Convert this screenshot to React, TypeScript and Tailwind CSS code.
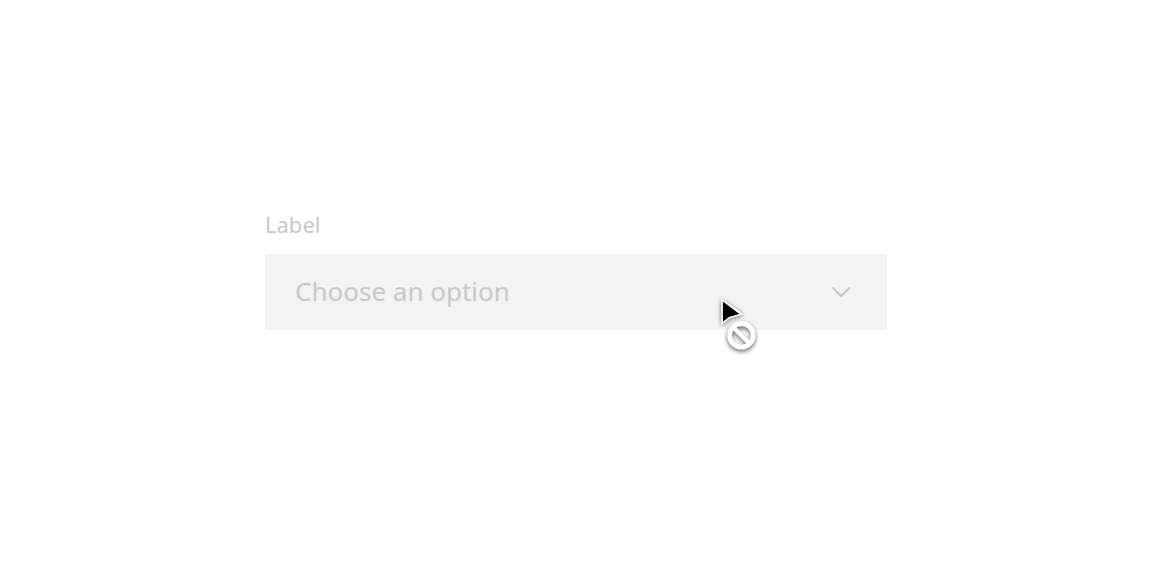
export default function App() {
  return (
    <main className="flex min-h-screen justify-center bg-white px-6 pt-52 font-['Noto_Sans',sans-serif] text-[#c8c8c8]">
      <div className="flex w-full max-w-[622px] flex-col">
        <label htmlFor="option" className="mb-3.5 text-[22px] leading-8">
          Label
        </label>
        <div className="relative cursor-not-allowed">
          <select
            id="option"
            disabled
            className="block h-19 w-full appearance-none rounded-[2px] bg-[#f3f3f3] px-[30px] pb-0.5 text-[26px] text-[#c8c8c8] opacity-100"
          >
            <option>Choose an option</option>
          </select>
          <svg
            className="pointer-events-none absolute top-8 right-9 h-3 w-5"
            viewBox="0 0 20 12"
            fill="none"
            stroke="#c6c6c6"
            strokeWidth="2"
            aria-hidden="true"
          >
            <path d="M1.500 1.500 10.200 10 19 1.500" />
          </svg>
          <svg
            className="pointer-events-none absolute top-[42px] right-[125px] h-[60px] w-[44px] overflow-visible"
            viewBox="0 0 44 60"
            aria-hidden="true"
          >
            <g className="drop-shadow-[0_1px_2px_rgba(0,0,0,0.55)]">
              <path d="M3.300 2.500v26.500l8.500-6.500 14-4.200z" fill="#fff" />
              <path d="M4.900 5.500v20.200l6-4.700 10.500-3z" fill="#000" />
            </g>
            <g
              className="drop-shadow-[0_2px_2px_rgba(0,0,0,0.6)]"
              fill="none"
              stroke="#fff"
            >
              <circle cx="23.400" cy="39.400" r="11.800" strokeWidth="4.800" />
              <path d="m16 32 15 15" strokeWidth="4.500" />
            </g>
          </svg>
        </div>
      </div>
    </main>
  );
}
